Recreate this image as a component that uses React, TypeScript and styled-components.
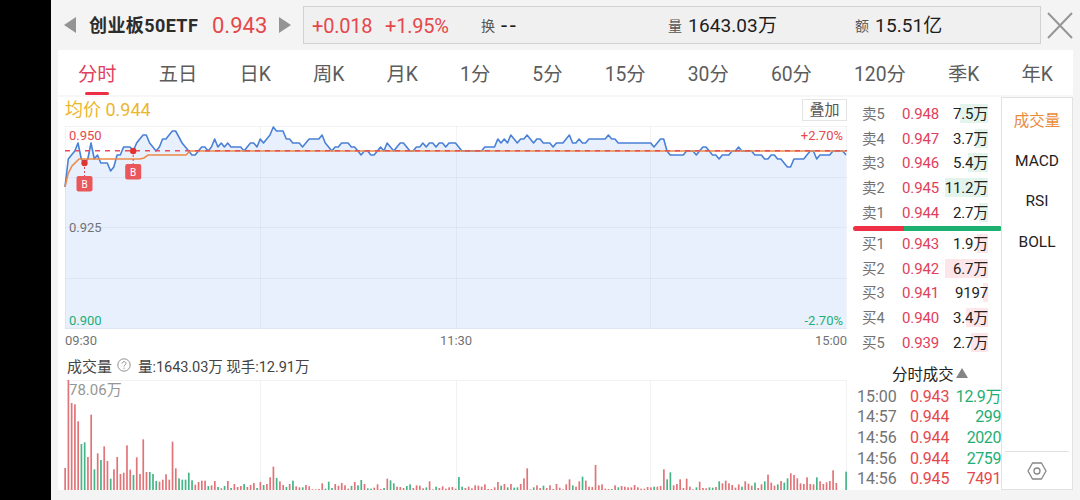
import styled, { createGlobalStyle } from 'styled-components';

const GlobalStyle = createGlobalStyle`
  * {
    box-sizing: border-box;
  }

  body {
    margin: 0;
    background: #000;
    font-family: Roboto, 'Noto Sans CJK SC', sans-serif;
    color: #222;
  }
`;

const colors = {
  red: '#e5484b',
  rise: '#e0405c',
  accent: '#ef2f45',
  green: '#1fae74',
  blue: '#4a80d6',
  orange: '#ec8a4a',
  gray: '#737373',
  line: '#e2e2e2',
};

const Screen = styled.div`
  width: 1080px;
  height: 500px;
  padding-left: 51px;
  overflow: hidden;
  background: #000;
`;

const Page = styled.div`
  display: flex;
  flex-direction: column;
  height: 500px;
  padding: 0 7px 10px;
  background: #f4f4f4;
`;

const Header = styled.header`
  display: flex;
  align-items: center;
  height: 50px;
  flex: none;
  padding-left: 6px;
  white-space: nowrap;
`;

const Name = styled.h1`
  margin: 0 0 0 13px;
  padding-top: 1px;
  width: 123px;
  font-size: 18px;
  line-height: 24px;
  font-weight: 700;
  letter-spacing: 0.4px;
  color: #2c2c2c;
`;

const Price = styled.span`
  width: 67px;
  font-size: 22px;
  line-height: 22px;
  padding-top: 2px;
  color: ${colors.red};
`;

const Summary = styled.div`
  display: grid;
  grid-template-columns: 73px 96px 187px 187px 1fr;
  align-items: center;
  flex: none;
  width: 738px;
  height: 38px;
  margin-left: 12px;
  padding: 1px 0 0 8px;
  border: 1px solid #d2d2d2;
  background: #f0f0f0;
`;

const Change = styled.span`
  padding-top: 1px;
  font-size: 20px;
  letter-spacing: -0.2px;
  color: ${colors.red};
`;

const Stat = styled.span`
  display: flex;
  align-items: center;
  gap: 6px;
  font-size: 19px;
  line-height: 26px;
  letter-spacing: 0.1px;
  color: #1d1d1d;

  small {
    font-size: 14px;
    color: #555;
  }
`;

const Empty = styled.span`
  font-size: 22px;
  line-height: 26px;
  letter-spacing: 2.5px;
`;

const CloseIcon = styled.svg`
  flex: none;
  margin-left: 6px;
`;

const Panel = styled.main`
  display: flex;
  flex-direction: column;
  width: 1015px;
  height: 440px;
  background: #fff;
`;

const Tabs = styled.nav`
  display: flex;
  justify-content: space-between;
  height: 47px;
  flex: none;
  padding: 0 20px 0 20px;
  border-bottom: 2px solid #f7f7f7;
`;

const Tab = styled.span<{ $active?: boolean }>`
  display: flex;
  flex-direction: column;
  align-items: center;
  font-size: 19.3px;
  line-height: 49px;
  white-space: nowrap;
  color: ${({ $active }) => ($active ? colors.rise : '#5c5c5c')};

  &::after {
    content: '';
    width: 24px;
    height: 4px;
    margin-top: -7px;
    border-radius: 2px;
    background: ${({ $active }) => ($active ? colors.accent : 'transparent')};
  }
`;

const Body = styled.div`
  display: grid;
  grid-template-columns: 789px 154px 72px;
  grid-template-rows: 393px;
  height: 393px;
`;

const Charts = styled.section`
  padding-left: 7px;
`;

const ChartHead = styled.div`
  display: flex;
  align-items: center;
  justify-content: space-between;
  height: 25px;
`;

const Average = styled.span`
  font-size: 18px;
  line-height: 25px;
  color: #ecb62f;
`;

const Overlay = styled.button`
  width: 45px;
  height: 22px;
  padding: 0;
  border: 1px solid #e4e4e4;
  background: #fff;
  font: inherit;
  font-size: 15px;
  line-height: 20px;
  color: #555;
`;

const Plot = styled.svg`
  display: block;
  overflow: visible;
`;

const TimeAxis = styled.div`
  display: grid;
  grid-template-columns: 1fr 1fr 1fr;
  height: 24px;
  font-size: 13px;
  line-height: 23px;
  letter-spacing: -0.1px;
  color: ${colors.gray};

  span:nth-child(2) {
    text-align: center;
  }

  span:nth-child(3) {
    text-align: right;
  }
`;

const VolumeHead = styled.div`
  display: flex;
  align-items: center;
  height: 26px;
  padding: 0 0 2px 2px;
  font-size: 15px;
  color: #444;

  svg {
    margin: 0 7px 0 5px;
  }
`;

const VolumeInfo = styled.span`
  font-size: 14.6px;
  letter-spacing: -0.1px;
`;

const Book = styled.section`
  padding: 5px 0 0 6px;
`;

const Level = styled.div`
  display: grid;
  grid-template-columns: 40px 43px 43px;
  height: 24.7px;
  padding-left: 9px;
  font-size: 15px;
  line-height: 24px;
  white-space: nowrap;
  color: ${colors.gray};
`;

const LevelLabel = styled.span`
  font-size: 14.6px;
`;

const LevelPrice = styled.span`
  letter-spacing: -0.1px;
  color: ${colors.rise};
`;

const LevelVolume = styled.span<{ $depth: number; $sell: boolean }>`
  display: flex;
  justify-content: flex-end;
  letter-spacing: -0.2px;
  color: #222;
  background: linear-gradient(${({ $sell }) => ($sell ? '#e2f4ec, #e2f4ec' : '#fde6ea, #fde6ea')})
    right 2px / ${({ $depth }) => $depth}px 19px no-repeat;
`;

const Ratio = styled.div`
  width: 149px;
  height: 5px;
  margin: 1px 0 0.5px;
  border-radius: 3px;
  background: linear-gradient(to right, ${colors.accent} 51px, #1db070 51px);
`;

const TradesTitle = styled.div`
  display: flex;
  align-items: center;
  gap: 2px;
  height: 25px;
  margin: 5px 0 1.5px;
  padding-left: 39px;
  font-size: 15.4px;
  color: #222;
`;

const Trade = styled.div`
  display: grid;
  grid-template-columns: 53px 40px 1fr;
  height: 20.6px;
  padding-left: 4px;
  font-size: 16px;
  line-height: 20px;
  white-space: nowrap;
  color: ${colors.gray};
`;

const TradePrice = styled.span`
  letter-spacing: -0.2px;
  color: ${colors.red};
`;

const TradeVolume = styled.span<{ $sell: boolean }>`
  display: flex;
  justify-content: flex-end;
  letter-spacing: -0.4px;
  color: ${({ $sell }) => ($sell ? colors.green : colors.red)};
`;

const Indicators = styled.aside`
  display: flex;
  flex-direction: column;
  align-items: center;
  padding-top: 3px;
  border: 1px solid ${colors.line};
`;

const Indicator = styled.span<{ $active?: boolean }>`
  height: 40.2px;
  font-size: 15.5px;
  line-height: 40px;
  color: ${({ $active }) => ($active ? '#e98b3c' : '#222')};
`;

const Settings = styled.div`
  display: flex;
  align-items: center;
  justify-content: center;
  width: 64px;
  height: 38px;
  margin-top: auto;
  border-top: 1px solid ${colors.line};
`;

const tabs = ['分时', '五日', '日K', '周K', '月K', '1分', '5分', '15分', '30分', '60分', '120分', '季K', '年K'];

const sells = [
  { label: '卖5', price: '0.948', volume: '7.5万', depth: 28 },
  { label: '卖4', price: '0.947', volume: '3.7万', depth: 13 },
  { label: '卖3', price: '0.946', volume: '5.4万', depth: 20 },
  { label: '卖2', price: '0.945', volume: '11.2万', depth: 43 },
  { label: '卖1', price: '0.944', volume: '2.7万', depth: 9 },
];

const buys = [
  { label: '买1', price: '0.943', volume: '1.9万', depth: 11 },
  { label: '买2', price: '0.942', volume: '6.7万', depth: 43 },
  { label: '买3', price: '0.941', volume: '9197', depth: 5 },
  { label: '买4', price: '0.940', volume: '3.4万', depth: 22 },
  { label: '买5', price: '0.939', volume: '2.7万', depth: 17 },
];

const trades = [
  { time: '15:00', price: '0.943', volume: '12.9万', sell: true },
  { time: '14:57', price: '0.944', volume: '299', sell: true },
  { time: '14:56', price: '0.944', volume: '2020', sell: true },
  { time: '14:56', price: '0.944', volume: '2759', sell: true },
  { time: '14:56', price: '0.945', volume: '7491', sell: false },
];

// minute prices, in thousandths above or below 0.944
const ticks = [
  -9, -2, -1, 0, 2, -2, -3, -2, 2, -2, -1, -3, -3, -3, -5, -4, -1, -1, 1, 1,
  1, 0, 2, 3, 4, 4, 2, 1, 0, 1, 3, 3, 4, 5, 5, 3.5, 2, 1, 0, -1,
  -1, 0, 1, 1, 0, 1, 3, 1, 2, 1, 2, 1, 1, 1, 1, 0, 1, 2, 2, 1,
  3, 2, 3, 4, 6, 5, 5, 5, 3, 3, 2, 2, 2, 1, 2, 3, 3, 3, 3, 4,
  2, 1, 0, 1, 1, 2, 2, 2, 1, 1, 0, -1, 0, 0, -1, -1, 0, 1, 0, 2,
  1, 0, 1, 2, 2, 1, 0, 0, 1, 1, 2, 1, 2, 2, 1, 2, 2, 1, 2, 2,
  2, 1, 0, 0, 0, 0, 0, 0, 0, 1, 1, 1, 1, 3, 2, 3, 2, 4, 3, 2,
  3, 3, 4, 3, 2, 3, 3, 2, 2, 2, 1, 2, 2, 2, 3, 4, 2, 2, 3, 2,
  2, 3, 3, 3, 3, 3, 3, 4, 3, 3, 2, 2, 2, 2, 2, 2, 2, 2, 2, 2,
  2, 1, 2, 3, 3, 0, -1, -1, -1, -1, -1, 0, 0, 0, -1, 0, 1, 1, 0, -1,
  -1, -2, -1, -1, -1, 0, 0, 1, 0, 0, 0, 0, -1, -1, -1, -2, -2, -1, -1, -2,
  -2, -3, -4, -4, -2, -2, -2, -2, -1, 0, 0, -2, -1, -1, -1, -1, 0, 0, 0, 0,
  -1,
];

// minute volumes, negative where the price fell
const volumes = [
  66, 330, 261, 257, 206, -138, -143, 99, 226, -62, 110, -90, 131, 87, -34, 62, 99, 48, 52, 134,
  61, -45, 98, 48, 152, 54, -54, -48, -27, 25, 31, 47, 31, 145, 65, -35, -31, -31, -52, -29,
  16, 24, 28, 28, -12, 14, 27, -9, 5, -12, 27, -6, 18, 9, 12, -18, 9, 15, 21, -6,
  24, -15, 18, 38, 70, -36, 26, 15, -9, 18, -28, 11, 8, -8, 15, 11, 2, 2, 3, 20,
  -4, -25, -6, 18, 13, 21, 14, 4, -12, 24, -14, -30, 18, -5, -4, 7, 17, 3, -6, 34,
  -29, -20, 10, 9, 6, -12, -17, 6, 14, 13, 5, -8, 26, 2, -10, 6, 11, 4, 8, 9,
  4, -39, -10, 6, 10, 5, 14, 13, 10, 17, 3, 3, 8, 24, -13, 18, -8, 18, -7, -8,
  18, 35, 65, 2, -8, 14, 6, -13, 6, 14, 3, 18, 7, 2, 17, 32, -14, 10, 26, -40,
  28, 10, 9, 75, 14, 17, 4, 3, -3, 14, -8, 12, 10, 8, 8, 15, 8, 4, 4, 9,
  8, -10, 10, 12, 62, -32, -53, 14, 18, 32, 6, 34, 10, 2, -8, 25, 6, 5, -8, -7,
  9, -26, 20, 28, 20, 15, 7, 17, -10, 26, 19, 13, -22, 6, 17, -26, 46, 22, 13, -17,
  27, -22, -35, 50, 45, 35, 20, 18, 38, 18, 17, -38, 26, 18, 23, 27, 59, 21, 0, 0,
  -55,
];

const WIDTH = 782;
const STEP = 3.254;
const BASE_Y = 29;

const linePoints = ticks.map((tick, i) => `${(i * STEP).toFixed(1)},${BASE_Y - tick * 4}`).join(' ');

function PriceChart() {
  return (
    <Plot width={WIDTH} height={207} viewBox={`0 0 ${WIDTH} 207`} fontSize={13}>
      <polygon points={`0,207 ${linePoints} 781,207`} fill="#e9f0fd" />
      <g stroke="#9aa5bd" strokeOpacity={0.13}>
        <path d="M0 4.5H782M0 55.5H782M0 105.5H782M0 156.5H782M0 206.5H782" />
        <path d="M.5 4V207M195.5 4V207M391.5 4V207M585.5 4V207M781.5 4V207" />
      </g>
      <polyline points={linePoints} fill="none" stroke={colors.blue} strokeWidth={1.6} strokeLinejoin="round" />
      <polyline
        points="0,65 3,52 7,44 14,37 75,37 79,36 83,33 121,33 125,29 781,29"
        fill="none"
        stroke={colors.orange}
        strokeWidth={1.6}
      />
      <path d="M0 28.8H782" stroke="#e94b5d" strokeWidth={1.4} strokeDasharray="5 5" />
      <Marker x={19.5} y={41} />
      <Marker x={68.2} y={29} />
      <text x={4} y={18} fill={colors.red}>0.950</text>
      <text x={4} y={110} fill={colors.gray}>0.925</text>
      <text x={4} y={203} fill={colors.green}>0.900</text>
      <text x={778} y={18} fill={colors.red} textAnchor="end">+2.70%</text>
      <text x={778} y={203} fill={colors.green} textAnchor="end">-2.70%</text>
    </Plot>
  );
}

function Marker({ x, y }: { x: number; y: number }) {
  return (
    <g>
      <path d={`M${x} ${y}V${y + 13}`} stroke="#e5484b" strokeDasharray="2 2" />
      <circle cx={x} cy={y} r={3.2} fill="#e0352f" />
      <rect x={x - 8} y={y + 13} width={16} height={15.5} rx={2} fill="#e9575a" />
      <text x={x} y={y + 24.5} fontSize={10} fill="#fff" textAnchor="middle">B</text>
    </g>
  );
}

function VolumeChart() {
  return (
    <Plot width={WIDTH} height={111} viewBox={`0 0 ${WIDTH} 111`}>
      <path d="M0 1.5H782M195.5 1V111M391.5 1V111M585.5 1V111M781.5 1V111" stroke="#f2f2f2" fill="none" />
      {volumes.map((volume, i) => (
        <rect
          key={i}
          x={i * STEP - 0.7}
          y={111 - Math.abs(volume) / 3}
          width={1.7}
          height={Math.abs(volume) / 3}
          fill={volume < 0 ? '#45b587' : '#e17478'}
        />
      ))}
      <text x={4} y={16} fontSize={15} fill="#969696">78.06万</text>
    </Plot>
  );
}

function Arrow({ left }: { left?: boolean }) {
  return (
    <svg width="12" height="16" viewBox="0 0 12 16">
      <path d={left ? 'M12 0V16L0 8Z' : 'M0 0V16L12 8Z'} fill="#949494" />
    </svg>
  );
}

interface LevelData {
  label: string;
  price: string;
  volume: string;
  depth: number;
}

function LevelRow({ level, sell }: { level: LevelData; sell: boolean }) {
  return (
    <Level>
      <LevelLabel>{level.label}</LevelLabel>
      <LevelPrice>{level.price}</LevelPrice>
      <LevelVolume $depth={level.depth} $sell={sell}>{level.volume}</LevelVolume>
    </Level>
  );
}

export default function App() {
  return (
    <Screen>
      <GlobalStyle />
      <Page>
        <Header>
          <Arrow left />
          <Name>创业板50ETF</Name>
          <Price>0.943</Price>
          <Arrow />
          <Summary>
            <Change>+0.018</Change>
            <Change>+1.95%</Change>
            <Stat><small>换</small><Empty>--</Empty></Stat>
            <Stat><small>量</small>1643.03万</Stat>
            <Stat><small>额</small>15.51亿</Stat>
          </Summary>
          <CloseIcon width="26" height="28" viewBox="0 0 26 28">
            <path d="M1 2L25 27M25 2L1 27" stroke="#969696" strokeWidth="2" />
          </CloseIcon>
        </Header>
        <Panel>
          <Tabs>
            {tabs.map((tab, i) => (
              <Tab key={tab} $active={i === 0}>{tab}</Tab>
            ))}
          </Tabs>
          <Body>
            <Charts>
              <ChartHead>
                <Average>均价 0.944</Average>
                <Overlay>叠加</Overlay>
              </ChartHead>
              <PriceChart />
              <TimeAxis>
                <span>09:30</span>
                <span>11:30</span>
                <span>15:00</span>
              </TimeAxis>
              <VolumeHead>
                成交量
                <svg width="14" height="14" viewBox="0 0 14 14" fill="none" stroke="#909090">
                  <circle cx="7" cy="7" r="6.2" />
                  <path d="M5 5.6C5 3 9 3 9 5.5C9 7 7 7 7 8.5M7 9.6V10.8" />
                </svg>
                <VolumeInfo>量:1643.03万 现手:12.91万</VolumeInfo>
              </VolumeHead>
              <VolumeChart />
            </Charts>
            <Book>
              {sells.map((level) => (
                <LevelRow key={level.label} level={level} sell />
              ))}
              <Ratio />
              {buys.map((level) => (
                <LevelRow key={level.label} level={level} sell={false} />
              ))}
              <TradesTitle>
                分时成交
                <svg width="12" height="10" viewBox="0 0 12 10">
                  <path d="M6 0L12 10H0Z" fill="#858585" />
                </svg>
              </TradesTitle>
              {trades.map((trade, i) => (
                <Trade key={i}>
                  <span>{trade.time}</span>
                  <TradePrice>{trade.price}</TradePrice>
                  <TradeVolume $sell={trade.sell}>{trade.volume}</TradeVolume>
                </Trade>
              ))}
            </Book>
            <Indicators>
              <Indicator $active>成交量</Indicator>
              <Indicator>MACD</Indicator>
              <Indicator>RSI</Indicator>
              <Indicator>BOLL</Indicator>
              <Settings>
                <svg width="20" height="18" viewBox="0 0 20 18" fill="none" stroke="#858585" strokeWidth="1.3">
                  <path d="M5.5 1H14.5L19 9L14.5 17H5.5L1 9Z" strokeLinejoin="round" />
                  <circle cx="10" cy="9" r="3" />
                </svg>
              </Settings>
            </Indicators>
          </Body>
        </Panel>
      </Page>
    </Screen>
  );
}
